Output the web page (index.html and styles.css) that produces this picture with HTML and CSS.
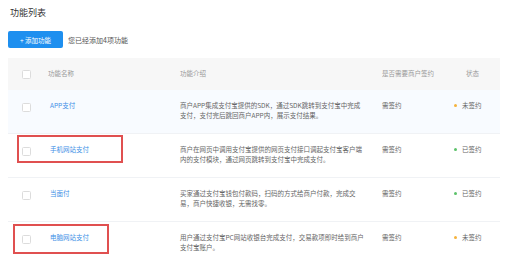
FILE: index.html
```html
<!DOCTYPE html>
<html lang="zh-CN">
<head>
    <meta charset="UTF-8">
    <title>功能列表</title>
    <link rel="stylesheet" href="styles.css">
</head>
<body>
    <div class="page">
        <h1 class="title">功能列表</h1>
        <div class="toolbar">
            <button class="btn-add" type="button">+ 添加功能</button>
            <span class="hint">您已经添加4项功能</span>
        </div>

        <div class="table">
            <div class="row head">
                <div class="cell check"><span class="box"></span></div>
                <div class="cell">功能名称</div>
                <div class="cell">功能介绍</div>
                <div class="cell">是否需要商户签约</div>
                <div class="cell status-head">状态</div>
            </div>

            <div class="row active">
                <div class="cell check"><span class="box"></span></div>
                <div class="cell name">APP支付</div>
                <div class="cell desc">商户APP集成支付宝提供的SDK，通过SDK跳转到支付宝中完成<br>支付，支付完后跳回商户APP内，展示支付结果。</div>
                <div class="cell">需签约</div>
                <div class="cell"><span class="dot dot-wait"></span>未签约</div>
            </div>

            <div class="row">
                <div class="cell check"><span class="box"></span></div>
                <div class="cell name">手机网站支付</div>
                <div class="cell desc">商户在网页中调用支付宝提供的网页支付接口调起支付宝客户端<br>内的支付模块，通过网页跳转到支付宝中完成支付。</div>
                <div class="cell">需签约</div>
                <div class="cell"><span class="dot dot-ok"></span>已签约</div>
                <div class="mark mark-1"></div>
            </div>

            <div class="row">
                <div class="cell check"><span class="box"></span></div>
                <div class="cell name">当面付</div>
                <div class="cell desc">买家通过支付宝钱包付款码，扫码的方式给商户付款，完成交<br>易，商户快捷收银，无需找零。</div>
                <div class="cell">需签约</div>
                <div class="cell"><span class="dot dot-ok"></span>已签约</div>
            </div>

            <div class="row">
                <div class="cell check"><span class="box"></span></div>
                <div class="cell name">电脑网站支付</div>
                <div class="cell desc">用户通过支付宝PC网站收银台完成支付，交易款项即时给到商户<br>支付宝账户。</div>
                <div class="cell">需签约</div>
                <div class="cell"><span class="dot dot-wait"></span>未签约</div>
                <div class="mark mark-2"></div>
            </div>
        </div>
    </div>
</body>
</html>
```

FILE: styles.css
```css
body {
    margin: 0;
    background: #ffffff;
    font-family: "Noto Sans CJK SC", "Noto Sans", sans-serif;
    color: #666666;
}
.page {
    padding: 0 5px 0 8px;
}
.title {
    margin: 0;
    padding: 7px 0 0 2px;
    height: 17px;
    font-size: 9px;
    line-height: 12px;
    font-weight: normal;
    color: #333333;
}
.toolbar {
    display: flex;
    align-items: center;
    gap: 5px;
    margin-top: 7px;
    height: 17px;
}
.btn-add {
    width: 55px;
    height: 17px;
    padding: 0;
    border: none;
    border-radius: 2px;
    background: #1e8fef;
    color: #ffffff;
    font-family: inherit;
    font-size: 6.5px;
}
.hint {
    font-size: 7px;
    color: #555555;
}
.table {
    margin-top: 10px;
}
.row {
    position: relative;
    display: grid;
    grid-template-columns: 42px 130px 202px 72px 1fr;
    min-height: 43px;
    border-bottom: 1px solid #f0f2f5;
    font-size: 6.5px;
    line-height: 9.5px;
}
.row .cell {
    padding-top: 11px;
}
.row.head {
    min-height: 32px;
    align-items: center;
    background: #f7f7f7;
    border-bottom: none;
    color: #999999;
}
.row.head .cell {
    padding-top: 0;
}
.row.active {
    background: #f8fbff;
}
.cell.check {
    padding-left: 14px;
}
.box {
    display: block;
    width: 7px;
    height: 7px;
    border: 1px solid #dcdcdc;
    border-radius: 1.5px;
    background: #ffffff;
}
.row .cell.check {
    padding-top: 13px;
}
.row.head .cell.check {
    padding-top: 0;
}
.row.head .cell:nth-child(2) {
    margin-left: -2px;
}
.name {
    color: #3c8fe6;
}
.status-head {
    padding-left: 12px;
}
.dot {
    display: inline-block;
    width: 3px;
    height: 3px;
    margin: 0 5px 1px 0;
    border-radius: 50%;
    vertical-align: middle;
}
.dot-wait {
    background: #f5b23c;
}
.dot-ok {
    background: #5cc26a;
}
.mark {
    position: absolute;
    box-sizing: border-box;
    border: 2px solid #e05050;
}
.mark-1 {
    left: 9px;
    top: 1px;
    width: 106px;
    height: 28px;
}
.mark-2 {
    left: 5px;
    top: 2px;
    width: 96px;
    height: 30px;
}
```
